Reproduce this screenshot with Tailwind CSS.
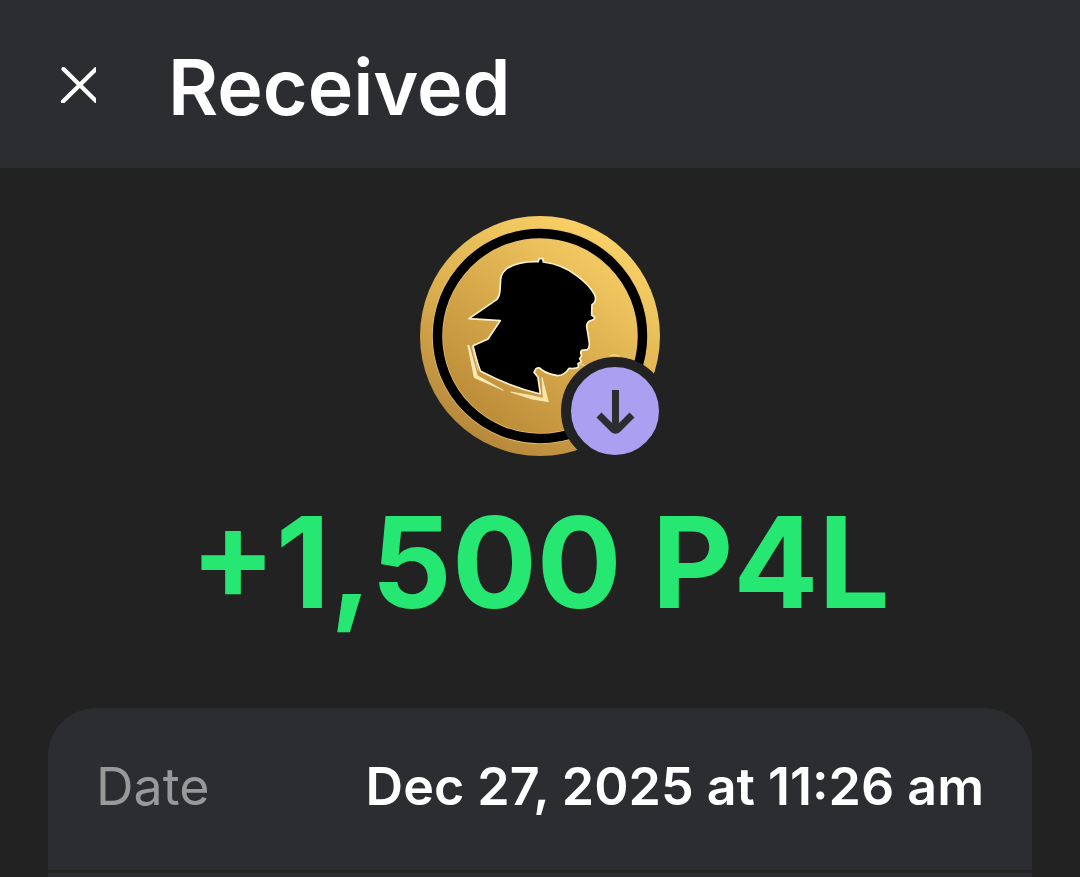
<!DOCTYPE html>
<html lang="en">
<head>
    <meta charset="UTF-8">
    <meta name="viewport" content="width=device-width, initial-scale=1.0">
    <title>Received</title>
    <script src="https://cdn.jsdelivr.net/npm/@tailwindcss/browser@4"></script>
</head>
<body class="bg-[#222222] font-['Inter',sans-serif] text-white overflow-x-hidden">

    <!-- Header -->
    <header class="flex items-start gap-18 bg-[#2c2d30] px-15 pt-[39px] pb-[33px]">
        <button type="button" aria-label="Close" class="mt-7 size-9 cursor-pointer">
            <svg class="size-full" viewBox="0 0 36 36" fill="none" stroke="currentColor" stroke-width="4.200" stroke-linecap="round">
                <path d="M3.500 2 L37 35 M36.500 1.500 L3 34.500" />
            </svg>
        </button>
        <h1 class="text-[77px] leading-[96px] font-semibold">Received</h1>
    </header>

    <main class="px-12 pt-12">
        <!-- Token -->
        <div class="relative mx-auto size-60">
            <svg class="size-full" viewBox="0 0 240 240" role="img" aria-label="P4L">
                <defs>
                    <linearGradient id="rim" x1="0.8" y1="0.1" x2="0.3" y2="1">
                        <stop offset="0" stop-color="#f8d066" />
                        <stop offset="0.5" stop-color="#dcb04f" />
                        <stop offset="1" stop-color="#b5863a" />
                    </linearGradient>
                    <linearGradient id="face" x1="0.95" y1="0.1" x2="0.25" y2="1">
                        <stop offset="0" stop-color="#fad068" />
                        <stop offset="0.5" stop-color="#d9ab4c" />
                        <stop offset="1" stop-color="#b88936" />
                    </linearGradient>
                </defs>
                <circle cx="120" cy="120" r="120" fill="url(#rim)" />
                <circle cx="120" cy="120" r="102.500" fill="url(#face)" stroke="#e6c070" stroke-width="11" />
                <circle cx="120" cy="120" r="102.500" fill="none" stroke="#000" stroke-width="9.500" />
                <g transform="translate(40 34) scale(0.3333)" stroke-linejoin="round">
                    <path d="M27 206 L111 148 Q119 138 120 120 L122 88 Q124 66 145 53 Q180 33 235 35 L237 26 L248 26 L250 36 Q310 44 350 77 Q388 105 404 134 Q412 154 396 164 L395 195 L404 202 L402 208 L392 212 Q380 216 380 230 Q384 252 387 272 Q391 292 382 299 L365 301 Q360 307 365 317 L359 326 L364 335 L354 341 L356 350 Q350 357 327 355 Q314 376 293 377 Q262 372 246 360 Q238 350 228 356 L222 367 L234 382 L241 432 Q150 410 62 364 Q54 348 39 287 L84 267 L121 212 Z" fill="#000" stroke="#fff3cf" stroke-width="5" />
                    <path d="M23 285 L43 383 L130 421 L86 396 L52 377 L28 288 Z" fill="#ffeab0" stroke="#fff3cf" stroke-width="2" />
                    <path d="M36 290 L54 362" fill="none" stroke="#ffe9b0" stroke-width="2" />
                    <path d="M152 426 L200 434 L250 445 L246 382 L265 455 L215 447 Z" fill="#ffe6a5" stroke="#fff3cf" stroke-width="2" />
                    <path d="M360 341 L380 350 M450 318 L462 314 L478 318" fill="none" stroke="#ffe6a5" stroke-width="3" />
                </g>
            </svg>
            <!-- Direction badge -->
            <div class="absolute -right-[9px] -bottom-[9px] size-27 rounded-full border-10 border-[#222222] bg-[#ab9ff2]">
                <svg class="size-full" viewBox="0 0 88 88" fill="none" stroke="#2c2d30" stroke-width="7">
                    <path d="M44.500 23 V62 M28 48 L42 62 Q44.500 64.500 47 62 L61 48" />
                </svg>
            </div>
        </div>

        <!-- Amount -->
        <p class="mt-7 text-center text-[126px] leading-[156px] font-bold text-[#25e772]">+1,500 P4L</p>

        <!-- Details -->
        <dl class="mt-17 rounded-t-[48px] bg-[#2c2d30]">
            <div class="flex items-center justify-between border-b-3 border-[#222222] px-12 pt-12 pb-13 text-[52px] leading-[62px]">
                <dt class="text-[#999999]">Date</dt>
                <dd class="font-semibold">Dec 27, 2025 at 11:26 am</dd>
            </div>
            <div class="h-1"></div>
        </dl>
    </main>

</body>
</html>
